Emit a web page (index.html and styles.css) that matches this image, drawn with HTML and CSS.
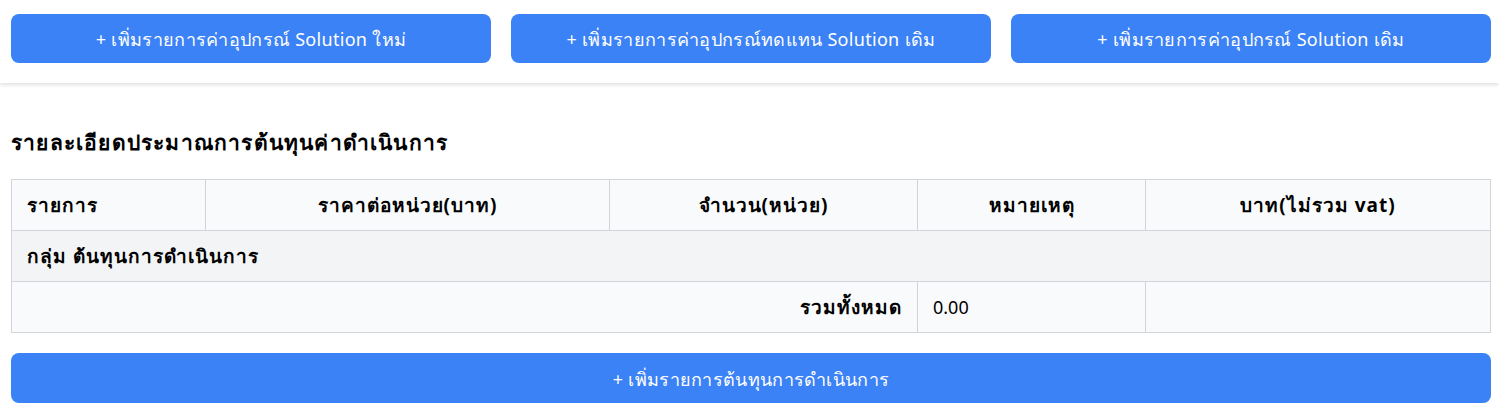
FILE: index.html
```html
<!DOCTYPE html>
<html lang="th">
<head>
<meta charset="utf-8">
<link rel="stylesheet" href="styles.css">
</head>
<body>
<div class="topbar">
  <button class="btn">+ เพิ่มรายการค่าอุปกรณ์ Solution ใหม่</button>
  <button class="btn">+ เพิ่มรายการค่าอุปกรณ์ทดแทน Solution เดิม</button>
  <button class="btn">+ เพิ่มรายการค่าอุปกรณ์ Solution เดิม</button>
</div>
<div class="content">
  <h2 class="title">รายละเอียดประมาณการต้นทุนค่าดำเนินการ</h2>
  <table class="cost">
    <colgroup>
      <col class="c1"><col class="c2"><col class="c3"><col class="c4"><col class="c5">
    </colgroup>
    <thead>
      <tr>
        <th class="left">รายการ</th>
        <th>ราคาต่อหน่วย(บาท)</th>
        <th>จำนวน(หน่วย)</th>
        <th>หมายเหตุ</th>
        <th>บาท(ไม่รวม vat)</th>
      </tr>
    </thead>
    <tbody>
      <tr class="group">
        <td colspan="5">กลุ่ม ต้นทุนการดำเนินการ</td>
      </tr>
      <tr class="total">
        <td colspan="3" class="right">รวมทั้งหมด</td>
        <td class="num">0.00</td>
        <td></td>
      </tr>
    </tbody>
  </table>
  <button class="btn wide">+ เพิ่มรายการต้นทุนการดำเนินการ</button>
</div>
</body>
</html>
```
FILE: styles.css
```css
* { box-sizing: border-box; }
body {
  margin: 0;
  font-family: "Noto Sans", "Liberation Sans", sans-serif;
  color: #000;
  background: #fff;
}
.topbar {
  display: grid;
  grid-template-columns: repeat(3, 1fr);
  gap: 20px;
  padding: 14px 8px 20px 11px;
  background: #fff;
  box-shadow: 0 2px 4px rgba(0, 0, 0, 0.12);
}
.btn {
  height: 49px;
  padding: 2px 0 0;
  border: none;
  border-radius: 8px;
  background: #3b82f6;
  color: #fff;
  font-family: inherit;
  font-size: 18px;
  letter-spacing: 0.3px;
  cursor: pointer;
}
.content {
  padding: 0 8px 0 11px;
}
.title {
  margin: 45px 0 23px;
  font-size: 21px;
  line-height: 28px;
  letter-spacing: 1.2px;
  font-weight: 700;
}
.cost {
  width: 100%;
  border-collapse: collapse;
  table-layout: fixed;
  font-size: 19px;
}
.c1 { width: 194px; }
.c2 { width: 404px; }
.c3 { width: 308px; }
.c4 { width: 228px; }
.c5 { width: auto; }
.cost th, .cost td {
  border: 1px solid #d1d5db;
  height: 51px;
  padding: 0 15px;
  font-weight: 700;
  letter-spacing: 1px;
  line-height: 24px;
}
.cost thead tr { background: #f9fafb; }
.cost th { text-align: center; }
.cost th.left { text-align: left; }
.group { background: #f3f4f6; }
.group td { text-align: left; }
.total { background: #f9fafb; }
.total td.right { text-align: right; }
.total td.num { font-weight: 400; font-size: 18px; letter-spacing: 0; text-align: left; }
.wide {
  display: block;
  width: 100%;
  margin-top: 20px;
  height: 50px;
}
```
